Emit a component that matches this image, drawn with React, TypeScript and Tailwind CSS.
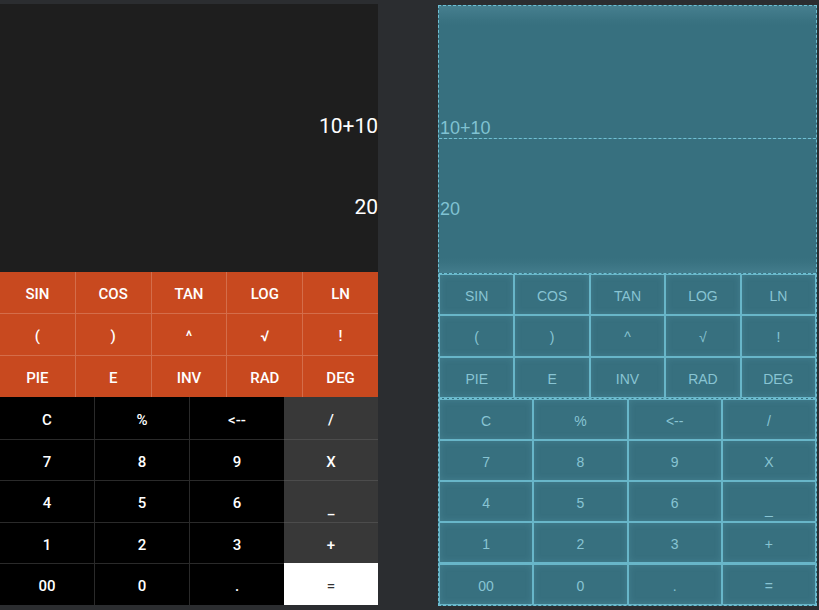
import React from "react";

const sci = [
  ["SIN", "COS", "TAN", "LOG", "LN"],
  ["(", ")", "^", "√", "!"],
  ["PIE", "E", "INV", "RAD", "DEG"],
];
const nums = [
  ["C", "%", "<--", "/"],
  ["7", "8", "9", "X"],
  ["4", "5", "6", "_"],
  ["1", "2", "3", "+"],
  ["00", "0", ".", "="],
];

const roboto = { fontFamily: "Roboto, 'Noto Sans', sans-serif" };
const arial = { fontFamily: "'Liberation Sans', Arial, sans-serif" };

function Design() {
  return (
    <div className="mt-[4px] w-[378px] h-[601px] flex flex-col bg-[#1e1e1e]" style={roboto}>
      <div className="h-[134px] flex items-end justify-end text-[21px] text-white leading-[24px]">10+10</div>
      <div className="h-[134px] flex items-center justify-end text-[21px] text-white pt-[5px]">20</div>
      <div className="h-[125px] flex flex-col bg-[#c8491f]">
        {sci.map((row, r) => (
          <div key={r} className={"flex-1 flex " + (r > 0 ? "border-t border-[#d46d4a]" : "")}>
            {row.map((t, c) => (
              <div
                key={c}
                className={
                  "flex-1 flex items-center justify-center pt-[4px] text-white text-[15px] font-medium " +
                  (c > 0 ? "border-l border-[#d46d4a]" : "")
                }
              >
                {t}
              </div>
            ))}
          </div>
        ))}
      </div>
      <div className="flex-1 flex flex-col bg-black">
        {nums.map((row, r) => (
          <div key={r} className="flex-1 flex">
            {row.map((t, c) => {
              const last = c === 3;
              const eq = last && r === 4;
              let cls = "flex-1 flex items-center justify-center pt-[4px] text-[15px] font-medium ";
              if (eq) cls += "bg-white text-[#333] ";
              else if (last) cls += "bg-[#383838] text-white " + (r > 0 ? "border-t border-[#4c4c4c] " : "");
              else cls += "text-white " + (r > 0 ? "border-t border-[#2a2a2a] " : "") + (c > 0 ? "border-l border-[#2a2a2a] " : "");
              return (
                <div key={c} className={cls}>
                  {t === "_" ? <span className="mt-[12px]">_</span> : t}
                </div>
              );
            })}
          </div>
        ))}
      </div>
    </div>
  );
}

function BCell({ t }: { t: string }) {
  return (
    <div className="flex-1 flex items-center justify-center pt-[4px] border border-[#68b6c9] bg-[#37707f] shadow-[inset_0_0_6px_rgba(120,185,205,0.22)] text-[14px] text-[#88c4d3]">
      {t === "_" ? <span className="mt-[12px]">_</span> : t}
    </div>
  );
}

function Blueprint() {
  return (
    <div
      className="mt-[5px] ml-[60px] w-[379px] h-[601px] flex flex-col bg-[#37707f] border border-dashed border-[#6ec0d4]"
      style={arial}
    >
      <div className="h-[133px] flex items-end text-[18px] text-[#80c2d2] border-b border-dashed border-[#6ec0d4] bg-[linear-gradient(#467f8f_0px,#3a7382_14px,#37707f_20px)] pl-[1px] leading-[19px]">
        10+10
      </div>
      <div className="h-[134px] flex items-center text-[18px] text-[#80c2d2] bg-[linear-gradient(to_top,#437c8c_0px,#3a7382_10px,#37707f_16px)] pl-[1px] pt-[6px]">
        20
      </div>
      <div className="h-[125px] flex flex-col border-t border-dashed border-[#6ec0d4]">
        {sci.map((row, r) => (
          <div key={r} className="flex-1 flex">
            {row.map((t, c) => (
              <BCell key={c} t={t} />
            ))}
          </div>
        ))}
      </div>
      <div className="flex-1 flex flex-col border-t border-dashed border-[#6ec0d4]">
        {nums.map((row, r) => (
          <div key={r} className={"flex-1 flex " + (r === 4 ? "border-t border-[#68b6c9]" : "")}>
            {row.map((t, c) => (
              <BCell key={c} t={t} />
            ))}
          </div>
        ))}
      </div>
    </div>
  );
}

export default function App() {
  return (
    <div className="w-[819px] h-[610px] bg-[#2b2d30] flex overflow-hidden">
      <Design />
      <Blueprint />
    </div>
  );
}
